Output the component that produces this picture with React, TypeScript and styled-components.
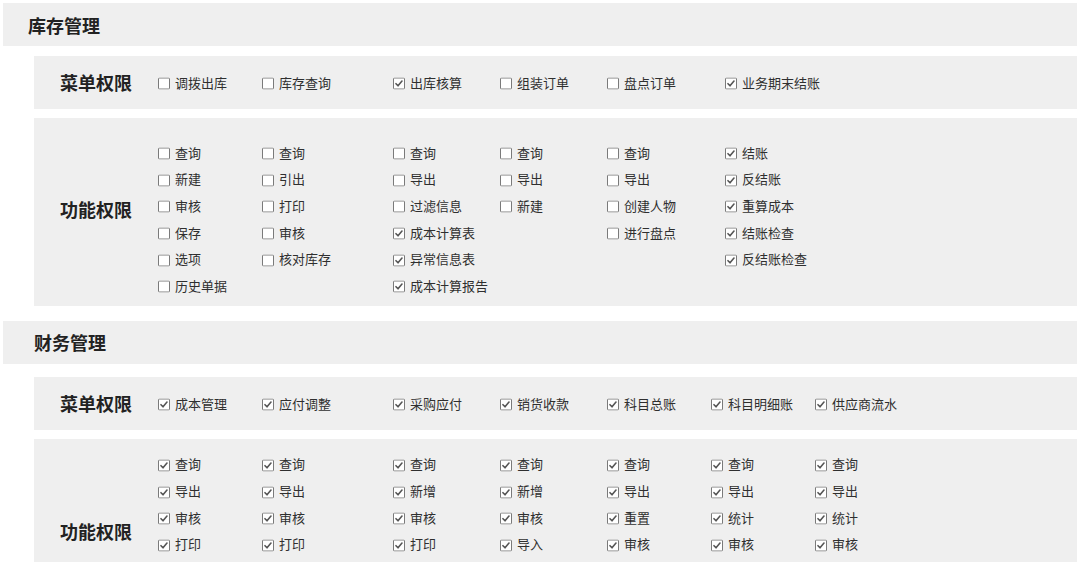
import React from "react";
import styled, { createGlobalStyle } from "styled-components";

const Global = createGlobalStyle`
  html, body { margin: 0; padding: 0; background: #ffffff; }
  body { font-family: "Noto Sans CJK SC", "Noto Sans", sans-serif; color: #333; }
`;

const Page = styled.div`
  padding: 3px 3px 0 3px;
  display: flex;
  flex-direction: column;
`;

const SectionHeader = styled.div<{ $indent: number; $top: number }>`
  height: 43px;
  margin-top: ${(p) => p.$top}px;
  background: #efefef;
  display: flex;
  align-items: center;
  padding-left: ${(p) => p.$indent}px;
  font-size: 18px;
  font-weight: 700;
  color: #222;
`;

const Panel = styled.div<{ $top: number; $minH?: number }>`
  margin: ${(p) => p.$top}px 0 0 31px;
  background: #efefef;
  display: flex;
  min-height: ${(p) => (p.$minH ? `${p.$minH}px` : "auto")};
  box-sizing: border-box;
`;

const Label = styled.div<{ $lift?: number }>`
  width: 124px;
  flex: none;
  align-self: center;
  text-align: center;
  font-size: 18px;
  font-weight: 700;
  color: #222;
  line-height: 26px;
  padding-bottom: ${(p) => (p.$lift ?? 0) * 2}px;
`;

const Columns = styled.div<{ $pt: number; $pb: number }>`
  display: flex;
  align-items: flex-start;
  padding: ${(p) => p.$pt}px 0 ${(p) => p.$pb}px 0;
`;

const Column = styled.div<{ $w: number }>`
  width: ${(p) => p.$w}px;
  flex: none;
  display: flex;
  flex-direction: column;
`;

const Item = styled.div`
  height: 26.7px;
  display: flex;
  align-items: center;
  gap: 5px;
  font-size: 13px;
  color: #2f2f2f;
  white-space: nowrap;
`;

const Box = styled.svg`
  flex: none;
  width: 12px;
  height: 12px;
  transform: translateY(1.5px);
`;

type Entry = [string, boolean];

const Check: React.FC<{ on: boolean }> = ({ on }) => (
  <Box viewBox="0 0 12 12">
    <rect x="0.5" y="0.5" width="11" height="11" rx="1" fill="#fff" stroke="#7a7a7a" />
    {on && (
      <path d="M3 6.2 L5 8.3 L9 3.6" fill="none" stroke="#555" strokeWidth="1.6" strokeLinecap="round" strokeLinejoin="round" />
    )}
  </Box>
);

const CheckItem: React.FC<{ e: Entry }> = ({ e }) => (
  <Item>
    <Check on={e[1]} />
    <span>{e[0]}</span>
  </Item>
);

const u = (...s: string[]): Entry[] => s.map((x) => [x, false]);
const c = (...s: string[]): Entry[] => s.map((x) => [x, true]);

const w1 = [104, 131, 107, 107, 118, 150];
const w2 = [104, 131, 107, 107, 104, 104, 150];

const menu1: Entry[] = [
  ["调拨出库", false],
  ["库存查询", false],
  ["出库核算", true],
  ["组装订单", false],
  ["盘点订单", false],
  ["业务期末结账", true],
];

const func1: Entry[][] = [
  u("查询", "新建", "审核", "保存", "选项", "历史单据"),
  u("查询", "引出", "打印", "审核", "核对库存"),
  [...u("查询", "导出", "过滤信息"), ...c("成本计算表", "异常信息表", "成本计算报告")],
  u("查询", "导出", "新建"),
  u("查询", "导出", "创建人物", "进行盘点"),
  c("结账", "反结账", "重算成本", "结账检查", "反结账检查"),
];

const menu2: Entry[] = c("成本管理", "应付调整", "采购应付", "销货收款", "科目总账", "科目明细账", "供应商流水");

const func2: Entry[][] = [
  c("查询", "导出", "审核", "打印"),
  c("查询", "导出", "审核", "打印"),
  c("查询", "新增", "审核", "打印"),
  c("查询", "新增", "审核", "导入"),
  c("查询", "导出", "重置", "审核"),
  c("查询", "导出", "统计", "审核"),
  c("查询", "导出", "统计", "审核"),
];

const MenuPanel: React.FC<{ items: Entry[]; widths: number[]; top: number }> = ({ items, widths, top }) => (
  <Panel $top={top}>
    <Label>菜单权限</Label>
    <Columns $pt={13} $pb={13}>
      {items.map((e, i) => (
        <Column key={i} $w={widths[i]}>
          <CheckItem e={e} />
        </Column>
      ))}
    </Columns>
  </Panel>
);

const FuncPanel: React.FC<{ cols: Entry[][]; widths: number[]; top: number; pt: number; pb: number; minH?: number }> = ({
  cols,
  widths,
  top,
  pt,
  pb,
  minH,
}) => (
  <Panel $top={top} $minH={minH}>
    <Label $lift={3}>功能权限</Label>
    <Columns $pt={pt} $pb={pb}>
      {cols.map((col, i) => (
        <Column key={i} $w={widths[i]}>
          {col.map((e, j) => (
            <CheckItem key={j} e={e} />
          ))}
        </Column>
      ))}
    </Columns>
  </Panel>
);

export default function App() {
  return (
    <>
      <Global />
      <Page>
        <SectionHeader $indent={25} $top={0}>库存管理</SectionHeader>
        <MenuPanel items={menu1} widths={w1} top={10} />
        <FuncPanel cols={func1} widths={w1} top={9} pt={21} pb={7} />
        <SectionHeader $indent={31} $top={15}>财务管理</SectionHeader>
        <MenuPanel items={menu2} widths={w2} top={13} />
        <FuncPanel cols={func2} widths={w2} top={9} pt={12} pb={10} minH={190} />
      </Page>
    </>
  );
}
